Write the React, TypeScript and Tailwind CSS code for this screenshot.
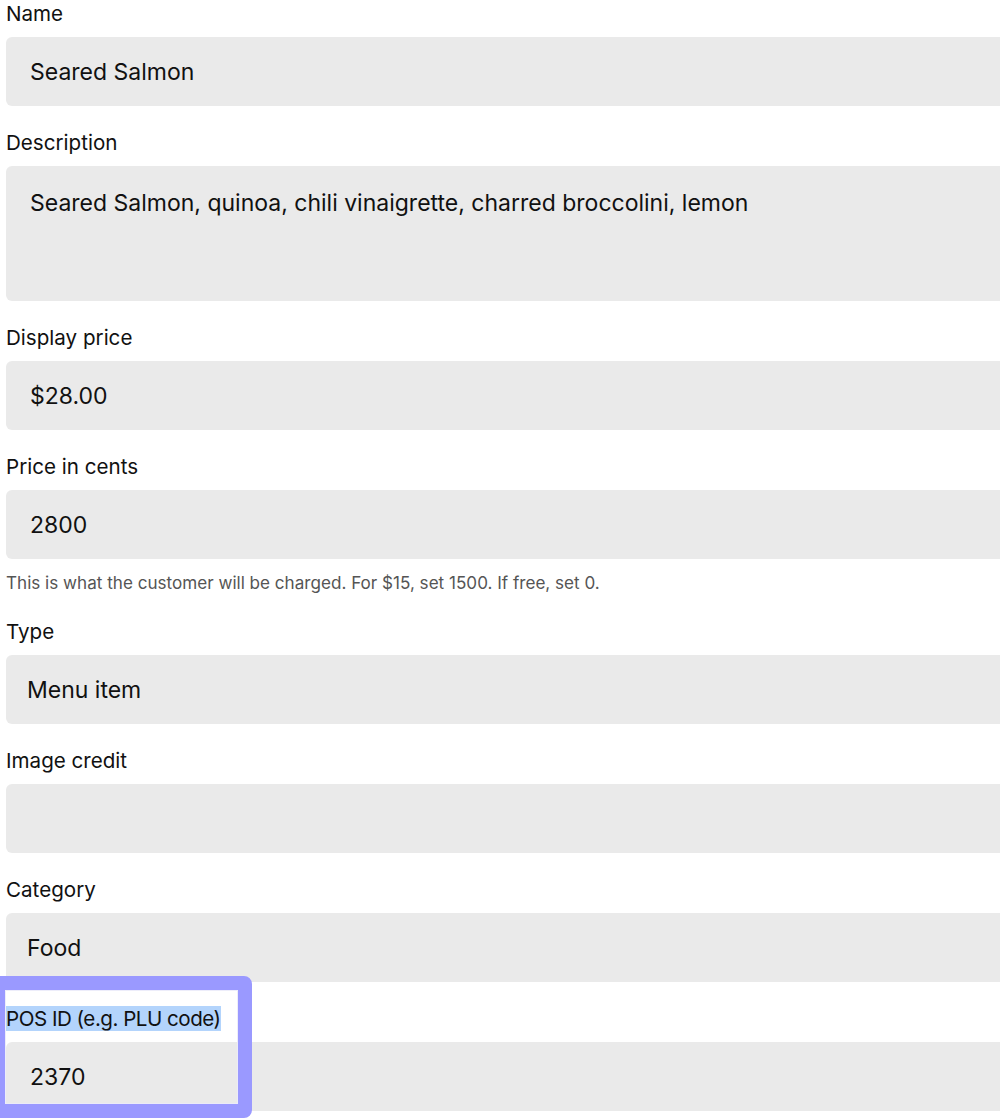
import React from "react";

const font = { fontFamily: "Inter, 'Noto Sans', sans-serif" };

function Label({ children, className = "" }: { children: React.ReactNode; className?: string }) {
  return <div className={`text-[20.6px] leading-6 text-[#111] ${className}`}>{children}</div>;
}

function Input({ value, select = false }: { value: string; select?: boolean }) {
  return (
    <div
      className={`mt-[11px] h-[69px] w-[1040px] rounded-l-[6px] bg-[#eaeaea] flex items-center text-[23px] text-[#111] ${
        select ? "pl-[21px]" : "pl-6"
      }`}
    >
      <span className="translate-y-[1px]">{value}</span>
    </div>
  );
}

export default function App() {
  return (
    <div className="relative w-[1000px] h-[1120px] overflow-hidden bg-white" style={font}>
      <div className="pl-[6px] pt-[2px] w-[1100px]">
        <Label>Name</Label>
        <Input value="Seared Salmon" />

        <Label className="mt-[25px]">Description</Label>
        <div className="mt-[11px] h-[135px] w-[1040px] rounded-l-[6px] bg-[#eaeaea] pl-6 pt-[22px] text-[23px] leading-[30px] text-[#111]">
          Seared Salmon, quinoa, chili vinaigrette, charred broccolini, lemon
        </div>

        <Label className="mt-[25px]">Display price</Label>
        <Input value="$28.00" />

        <Label className="mt-[25px]">Price in cents</Label>
        <Input value="2800" />
        <div className="mt-3 text-[17.1px] leading-6 text-[#555]">
          This is what the customer will be charged. For $15, set 1500. If free, set 0.
        </div>

        <Label className="mt-[25px]">Type</Label>
        <Input value="Menu item" select />

        <Label className="mt-[25px]">Image credit</Label>
        <Input value="" />

        <Label className="mt-[25px]">Category</Label>
        <Input value="Food" select />

        <Label className="mt-[25px]">
          <span className="bg-[#b3d4fc] tracking-[-0.5px]">POS ID (e.g. PLU code)</span>
        </Label>
        <Input value="2370" />
      </div>

      <div className="absolute left-[-9px] top-[976px] w-[261px] h-[142px] rounded-[8px] border-[14px] border-[#9a99ff] shadow-[inset_0_0_0_1px_rgba(235,235,250,0.9)]" />
    </div>
  );
}
